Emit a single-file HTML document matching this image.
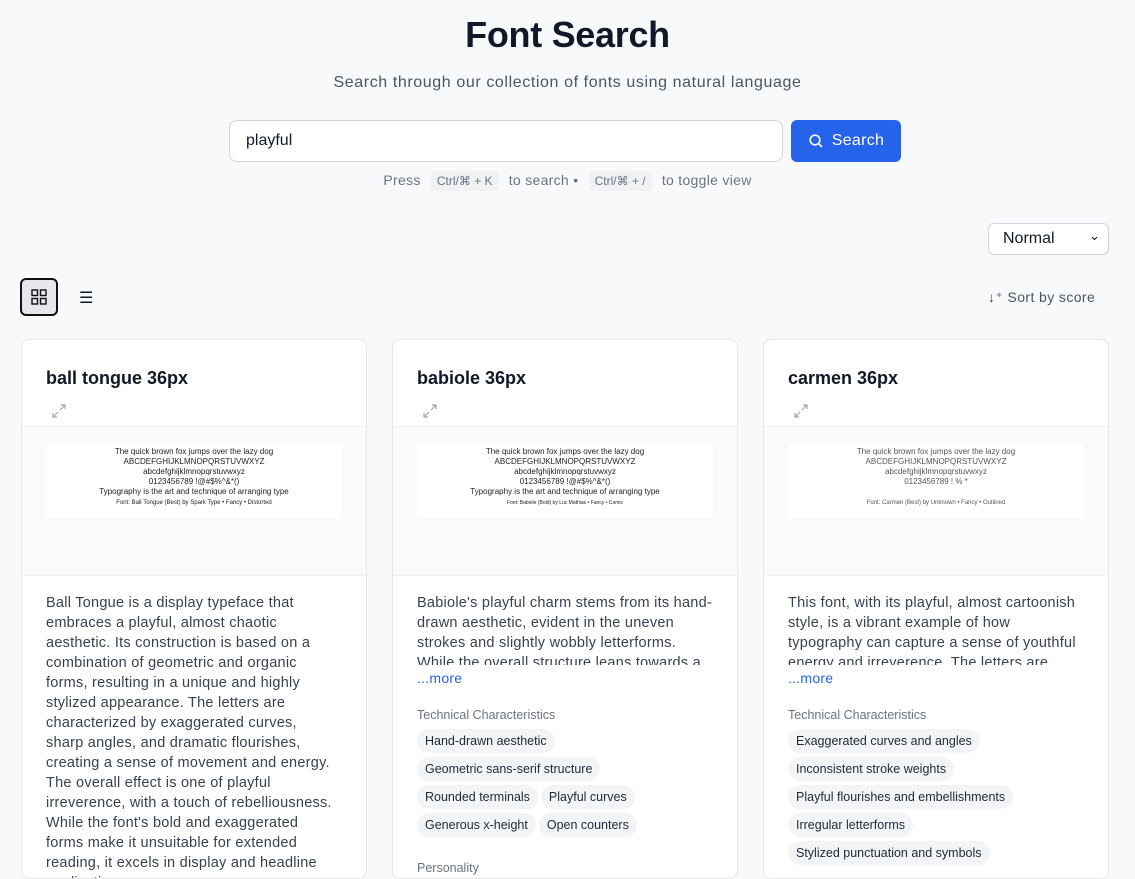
<!DOCTYPE html>
<html><head><meta charset="utf-8"><style>
*{box-sizing:border-box;margin:0;padding:0}
body{width:1135px;height:857px;overflow:hidden;background:#f8f9fb;font-family:"Liberation Sans",sans-serif;color:#111827;position:relative}
.abs{position:absolute}
h1{position:absolute;top:14px;left:0;width:1135px;text-align:center;font-size:36px;font-weight:bold;color:#111827;letter-spacing:-0.3px}
.sub{top:74px;left:0;width:1135px;text-align:center;font-size:16px;color:#4b5563;letter-spacing:0.6px}
.inp{left:229px;top:120px;width:554px;height:42px;background:#fff;border:1px solid #d1d5db;border-radius:8px;font-size:16px;padding:11px 16px}
.btn{left:791px;top:120px;width:110px;height:42px;background:#2563eb;border-radius:6px;color:#fff;font-size:16px;display:flex;align-items:center;justify-content:center;gap:8px;letter-spacing:0.3px}
.hint{top:172px;left:0;width:1135px;text-align:center;font-size:14px;color:#6b7280;letter-spacing:0.3px}
kbd{font-family:inherit;font-size:12px;background:#f0f1f3;padding:3px 6px;border-radius:3px;margin:0 6px;letter-spacing:0}
.sel{left:988px;top:223px;width:121px;height:32px;background:#fff;border:1px solid #d1d5db;border-radius:6px;font-size:16px;padding:6px 14px}
.card{top:339px;width:346px;height:540px;background:#fff;border:1px solid #e5e7eb;border-radius:8px;overflow:hidden}
.card h2{position:absolute;left:24px;top:28px;font-size:18px;font-weight:bold}
.card .ex{position:absolute;left:30px;top:64px}
.prev{position:absolute;left:0;top:86px;width:100%;height:150px;background:#f9fafb;border-top:1px solid #eef0f2;border-bottom:1px solid #eef0f2}
.img{position:absolute;left:24px;top:17px;width:296px;height:74px;background:#fff;text-align:center;font-size:8px;line-height:10px;padding-top:3px;color:#222}
.desc{position:absolute;left:24px;top:253px;width:300px;font-size:14.5px;line-height:20px;color:#374151;letter-spacing:0.25px}
.clip{height:72px;overflow:hidden}
.more{color:#2563eb;font-size:14px;margin-top:3px}
.lab{font-size:12.5px;color:#6b7280;margin-top:17px;margin-bottom:4px;letter-spacing:0}
.tag{display:inline-block;background:#f3f4f6;border-radius:12px;font-size:12.5px;line-height:18px;padding:3px 8px;margin:0 3px 4px 0;color:#1f2937;letter-spacing:0}
</style></head><body>
<h1>Font Search</h1>
<div class="abs sub">Search through our collection of fonts using natural language</div>
<div class="abs inp">playful</div>
<div class="abs btn"><svg width="16" height="16" viewBox="0 0 16 16" fill="none" stroke="#fff" stroke-width="1.6"><circle cx="7" cy="7" r="4.8"/><path d="M10.5 10.5L14 14"/></svg>Search</div>
<div class="abs hint">Press <kbd>Ctrl/⌘ + K</kbd> to search • <kbd>Ctrl/⌘ + /</kbd> to toggle view</div>
<div class="abs sel">Normal<span style="position:absolute;right:8px;top:4px;font-size:13px">⌄</span></div>
<div class="abs" style="left:20px;top:278px;width:38px;height:38px;border:2px solid #111;border-radius:6px;background:#e5e7eb"><svg class="abs" style="left:9px;top:9px" width="16" height="16" viewBox="0 0 16 16" fill="none" stroke="#111" stroke-width="1.4"><rect x="1" y="1" width="5.5" height="5.5"/><rect x="9.5" y="1" width="5.5" height="5.5"/><rect x="1" y="9.5" width="5.5" height="5.5"/><rect x="9.5" y="9.5" width="5.5" height="5.5"/></svg></div>
<div class="abs" style="left:79px;top:288px;font-size:16px">☰</div>
<div class="abs" style="left:988px;top:289px;font-size:14px;color:#4b5563;letter-spacing:0.4px">↓⁺ Sort by score</div>

<div class="abs card" style="left:21px"><h2>ball tongue 36px</h2><svg class="ex" width="14" height="14" viewBox="0 0 14 14" fill="none" stroke="#9ca3af" stroke-width="1.2"><path d="M8 6L13 1M9 1h4v4M6 8L1 13M1 9v4h4"/></svg>
<div class="prev"><div class="img">The quick brown fox jumps over the lazy dog<br>ABCDEFGHIJKLMNOPQRSTUVWXYZ<br>abcdefghijklmnopqrstuvwxyz<br>0123456789 !@#$%^&amp;*()<br>Typography is the art and technique of arranging type<br><span style="font-size:6px">Font: Ball Tongue (Best) by Spark Type • Fancy • Distorted</span></div></div>
<div class="desc" style="width:292px">Ball Tongue is a display typeface that embraces a playful, almost chaotic aesthetic. Its construction is based on a combination of geometric and organic forms, resulting in a unique and highly stylized appearance. The letters are characterized by exaggerated curves, sharp angles, and dramatic flourishes, creating a sense of movement and energy. The overall effect is one of playful irreverence, with a touch of rebelliousness. While the font's bold and exaggerated forms make it unsuitable for extended reading, it excels in display and headline applications.</div></div>

<div class="abs card" style="left:392px"><h2>babiole 36px</h2><svg class="ex" width="14" height="14" viewBox="0 0 14 14" fill="none" stroke="#9ca3af" stroke-width="1.2"><path d="M8 6L13 1M9 1h4v4M6 8L1 13M1 9v4h4"/></svg>
<div class="prev"><div class="img">The quick brown fox jumps over the lazy dog<br>ABCDEFGHIJKLMNOPQRSTUVWXYZ<br>abcdefghijklmnopqrstuvwxyz<br>0123456789 !@#$%^&amp;*()<br>Typography is the art and technique of arranging type<br><span style="font-size:5px">Font: Babiole (Bold) by Luc Mathias • Fancy • Comic</span></div></div>
<div class="desc"><div class="clip">Babiole's playful charm stems from its hand-drawn aesthetic, evident in the uneven strokes and slightly wobbly letterforms. While the overall structure leans towards a</div><div class="more">...more</div>
<div class="lab">Technical Characteristics</div>
<span class="tag">Hand-drawn aesthetic</span><br><span class="tag">Geometric sans-serif structure</span><br><span class="tag">Rounded terminals</span><span class="tag">Playful curves</span><br><span class="tag">Generous x-height</span><span class="tag">Open counters</span>
<div class="lab">Personality</div></div></div>

<div class="abs card" style="left:763px"><h2>carmen 36px</h2><svg class="ex" width="14" height="14" viewBox="0 0 14 14" fill="none" stroke="#9ca3af" stroke-width="1.2"><path d="M8 6L13 1M9 1h4v4M6 8L1 13M1 9v4h4"/></svg>
<div class="prev"><div class="img" style="color:#555">The quick brown fox jumps over the lazy dog<br>ABCDEFGHIJKLMNOPQRSTUVWXYZ<br>abcdefghijklmnopqrstuvwxyz<br>0123456789 ! % *<br><br><span style="font-size:6px">Font: Carmen (Best) by Unknown • Fancy • Outlined</span></div></div>
<div class="desc"><div class="clip">This font, with its playful, almost cartoonish style, is a vibrant example of how typography can capture a sense of youthful energy and irreverence. The letters are</div><div class="more">...more</div>
<div class="lab">Technical Characteristics</div>
<span class="tag">Exaggerated curves and angles</span><br><span class="tag">Inconsistent stroke weights</span><br><span class="tag">Playful flourishes and embellishments</span><br><span class="tag">Irregular letterforms</span><br><span class="tag">Stylized punctuation and symbols</span></div></div>
</body></html>
